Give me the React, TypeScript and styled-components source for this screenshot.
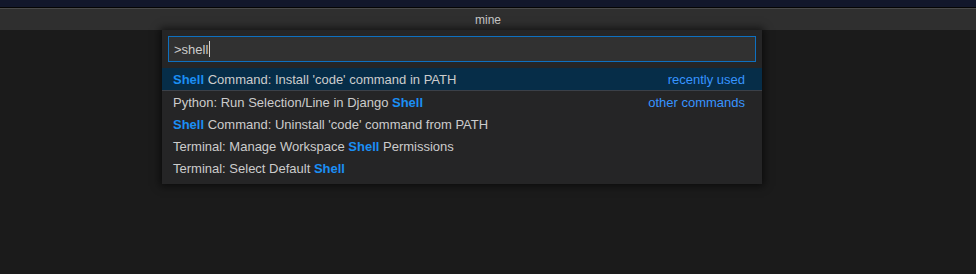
import React from "react";
import styled, { createGlobalStyle } from "styled-components";

const Global = createGlobalStyle`
  html, body { margin: 0; padding: 0; background: #1b1b1b; }
  body { font-family: "Liberation Sans", "Inter", sans-serif; -webkit-font-smoothing: antialiased; }
`;

const Page = styled.div`
  width: 976px;
  height: 274px;
  display: flex;
  flex-direction: column;
  background: #1b1b1b;
  overflow: hidden;
`;

const TopStrip = styled.div`
  height: 7px;
  background: #12172b;
  border-bottom: 1px solid #050505;
  flex: none;
`;

const TitleBar = styled.div`
  height: 21px;
  background: #2f2f2f;
  border-top: 1px solid #4a4a4a;
  display: flex;
  align-items: center;
  justify-content: center;
  color: #c8c8c8;
  font-size: 12px;
  flex: none;
`;

const Editor = styled.div`
  flex: 1;
  display: flex;
  justify-content: flex-start;
  padding-left: 162px;
`;

const Widget = styled.div`
  width: 600px;
  height: 154px;
  background: #252526;
  box-shadow: 0 0 8px 2px rgba(0, 0, 0, 0.6);
  padding: 6px 0 0 0;
  box-sizing: border-box;
  display: flex;
  flex-direction: column;
`;

const InputBox = styled.div`
  margin: 0 6px;
  height: 26px;
  box-sizing: border-box;
  border: 1px solid #0e70c0;
  background: #313131;
  display: flex;
  align-items: center;
  padding-left: 5px;
  color: #cccccc;
  font-size: 13px;
`;

const Caret = styled.span`
  display: inline-block;
  width: 1px;
  height: 16px;
  background: #d4d4d4;
  margin-left: 1px;
`;

const List = styled.div`
  margin-top: 6px;
  display: flex;
  flex-direction: column;
`;

const Row = styled.div<{ $selected?: boolean; $separator?: boolean }>`
  height: 22px;
  display: flex;
  align-items: center;
  justify-content: space-between;
  padding: 0 17px 0 11px;
  font-size: 13px;
  color: #cccccc;
  background: ${(p) => (p.$selected ? "#062d48" : "transparent")};
  border-top: ${(p) => (p.$separator ? "1px solid #3b4048" : "none")};
`;

const Hl = styled.span`
  color: #1b8ff4;
  font-weight: 700;
`;

const Tag = styled.span`
  color: #3794ff;
  font-size: 13px;
`;

type Part = string | { h: string };
const items: { parts: Part[]; tag?: string; sep?: boolean; sel?: boolean }[] = [
  { parts: [{ h: "Shell" }, " Command: Install 'code' command in PATH"], tag: "recently used", sel: true },
  { parts: ["Python: Run Selection/Line in Django ", { h: "Shell" }], tag: "other commands", sep: true },
  { parts: [{ h: "Shell" }, " Command: Uninstall 'code' command from PATH"] },
  { parts: ["Terminal: Manage Workspace ", { h: "Shell" }, " Permissions"] },
  { parts: ["Terminal: Select Default ", { h: "Shell" }] },
];

export default function App() {
  return (
    <Page>
      <Global />
      <TopStrip />
      <TitleBar>mine</TitleBar>
      <Editor>
        <Widget>
          <InputBox>
            &gt;shell
            <Caret />
          </InputBox>
          <List>
            {items.map((it, i) => (
              <Row key={i} $selected={it.sel} $separator={it.sep}>
                <span style={{ whiteSpace: "pre" }}>
                  {it.parts.map((p, j) =>
                    typeof p === "string" ? <React.Fragment key={j}>{p}</React.Fragment> : <Hl key={j}>{p.h}</Hl>
                  )}
                </span>
                {it.tag && <Tag>{it.tag}</Tag>}
              </Row>
            ))}
          </List>
        </Widget>
      </Editor>
    </Page>
  );
}
